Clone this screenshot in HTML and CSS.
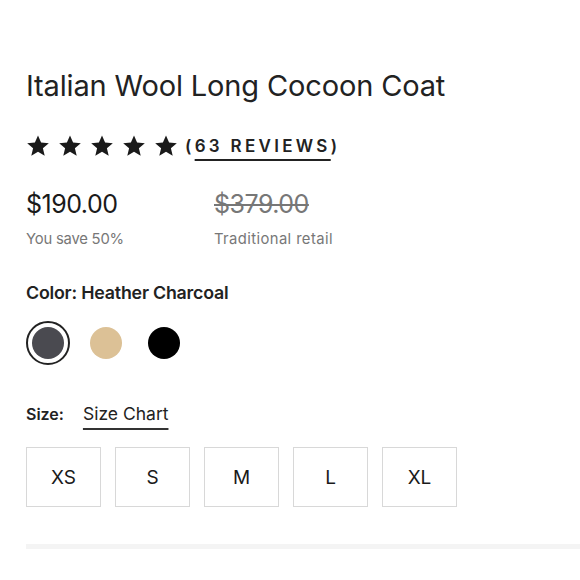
FILE: index.html
```html
<!DOCTYPE html>
<html lang="en">
<head>
<meta charset="utf-8">
<title>Italian Wool Long Cocoon Coat</title>
<link rel="stylesheet" href="styles.css">
</head>
<body>
<main class="product">
  <h1 class="title">Italian Wool Long Cocoon Coat</h1>
  <div class="rating">
    <div class="stars">
      <svg class="star" viewBox="0 0 24 24"><path d="M12 1.5l3.1 7.1 7.7.6-5.9 5 1.8 7.6L12 17.8l-6.7 4 1.8-7.6-5.9-5 7.7-.6z"/></svg>
      <svg class="star" viewBox="0 0 24 24"><path d="M12 1.5l3.1 7.1 7.7.6-5.9 5 1.8 7.6L12 17.8l-6.7 4 1.8-7.6-5.9-5 7.7-.6z"/></svg>
      <svg class="star" viewBox="0 0 24 24"><path d="M12 1.5l3.1 7.1 7.7.6-5.9 5 1.8 7.6L12 17.8l-6.7 4 1.8-7.6-5.9-5 7.7-.6z"/></svg>
      <svg class="star" viewBox="0 0 24 24"><path d="M12 1.5l3.1 7.1 7.7.6-5.9 5 1.8 7.6L12 17.8l-6.7 4 1.8-7.6-5.9-5 7.7-.6z"/></svg>
      <svg class="star" viewBox="0 0 24 24"><path d="M12 1.5l3.1 7.1 7.7.6-5.9 5 1.8 7.6L12 17.8l-6.7 4 1.8-7.6-5.9-5 7.7-.6z"/></svg>
    </div>
    <span class="reviews">(<a class="reviews-link" href="#">63 REVIEWS</a>)</span>
  </div>

  <div class="prices">
    <div class="price-col">
      <div class="price">$190.00</div>
      <div class="price-note">You save 50%</div>
    </div>
    <div class="price-col">
      <div class="price old">$379.00</div>
      <div class="price-note wide">Traditional retail</div>
    </div>
  </div>

  <div class="color-label">Color: Heather Charcoal</div>
  <div class="swatches">
    <button class="swatch selected"><span class="dot charcoal"></span></button>
    <button class="swatch"><span class="dot tan"></span></button>
    <button class="swatch"><span class="dot black"></span></button>
  </div>

  <div class="size-row">
    <span class="size-label">Size:</span>
    <a class="size-chart" href="#">Size Chart</a>
  </div>
  <div class="sizes">
    <button class="size">XS</button>
    <button class="size">S</button>
    <button class="size">M</button>
    <button class="size">L</button>
    <button class="size">XL</button>
  </div>

  <hr class="divider">
</main>
</body>
</html>
```

FILE: styles.css
```css
html, body {
  margin: 0;
  padding: 0;
  background: #fff;
}
body {
  font-family: Inter, "Liberation Sans", Arial, sans-serif;
  color: #1a1a1a;
}
.product {
  padding: 68px 0 0 26px;
}
.title {
  margin: 0;
  font-size: 29px;
  font-weight: 400;
  line-height: 36px;
  letter-spacing: -0.15px;
  color: #222;
}
.rating {
  display: flex;
  align-items: center;
  margin-top: 29px;
  height: 26px;
}
.stars {
  display: flex;
  gap: 8px;
}
.star {
  width: 24px;
  height: 24px;
  fill: #1a1a1a;
  display: block;
}
.reviews {
  margin-left: 7px;
  font-size: 17px;
  font-weight: 600;
  letter-spacing: 3.3px;
  color: #222;
}
.reviews-link {
  color: inherit;
  text-decoration: underline;
  text-decoration-thickness: 2px;
  text-underline-offset: 7px;
}
.prices {
  display: flex;
  margin-top: 29px;
}
.price-col {
  width: 188px;
}
.price {
  font-size: 25px;
  line-height: 32px;
  letter-spacing: -0.5px;
  color: #1a1a1a;
}
.price.old {
  color: #777;
  text-decoration: line-through;
  text-decoration-thickness: 1.5px;
}
.price-note {
  margin-top: 10px;
  font-size: 14.8px;
  color: #777;
  letter-spacing: -0.2px;
}
.price-note.wide {
  letter-spacing: 0.4px;
}
.color-label {
  margin-top: 34px;
  font-size: 17.8px;
  font-weight: 600;
  color: #222;
  letter-spacing: -0.2px;
}
.swatches {
  display: flex;
  gap: 14px;
  margin-top: 18px;
}
.swatch {
  width: 44px;
  height: 44px;
  padding: 0;
  border: 2px solid transparent;
  border-radius: 50%;
  background: none;
  display: flex;
  align-items: center;
  justify-content: center;
}
.swatch.selected {
  border-color: #222;
}
.dot {
  width: 32px;
  height: 32px;
  border-radius: 50%;
  display: block;
}
.charcoal { background: #4a4a50; }
.tan { background: #dcc196; }
.black { background: #000; }
.size-row {
  display: flex;
  align-items: baseline;
  gap: 19px;
  margin-top: 38px;
}
.size-label {
  font-size: 16px;
  font-weight: 600;
  color: #222;
}
.size-chart {
  font-size: 17.5px;
  color: #222;
  text-decoration: underline;
  text-decoration-thickness: 2px;
  text-underline-offset: 8px;
  text-decoration-color: #333;
}
.sizes {
  display: flex;
  gap: 14px;
  margin-top: 23px;
}
.size {
  width: 75px;
  height: 60px;
  border: 1.5px solid #d8d8d8;
  background: #fff;
  font-family: inherit;
  font-size: 19px;
  color: #1a1a1a;
  padding: 0;
}
.divider {
  margin: 37px 0 0 0;
  border: 0;
  height: 5px;
  background: #f4f4f4;
}
```
